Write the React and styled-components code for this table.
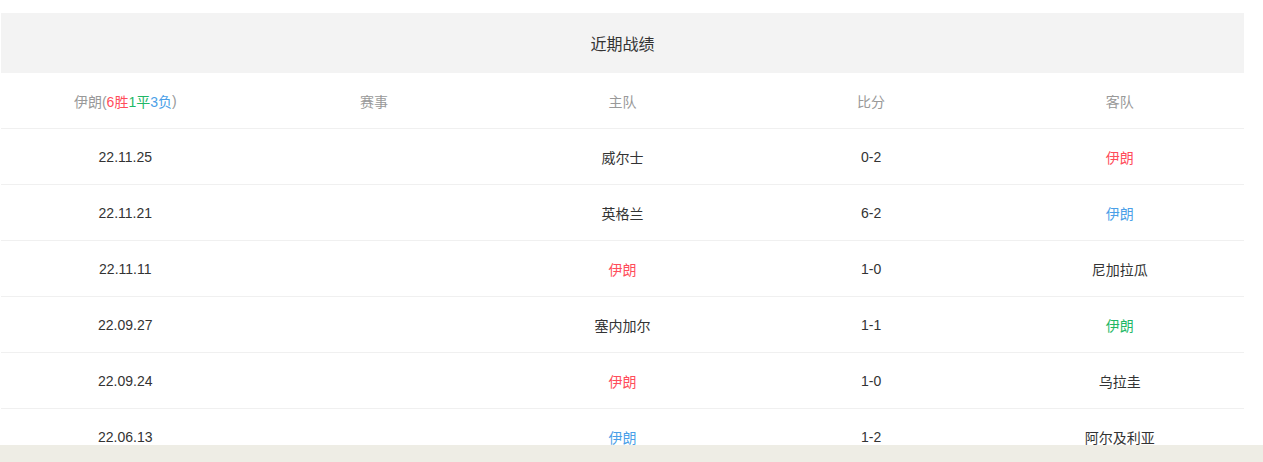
import React from 'react';
import styled, { createGlobalStyle } from 'styled-components';

const RESULT_COLORS = {
  win: '#ff4d5b',
  draw: '#1fb866',
  loss: '#4b9fe8',
};

const matches = [
  { date: '22.11.25', home: '威尔士', score: '0-2', away: '伊朗', mark: 'away', result: 'win' },
  { date: '22.11.21', home: '英格兰', score: '6-2', away: '伊朗', mark: 'away', result: 'loss' },
  { date: '22.11.11', home: '伊朗', score: '1-0', away: '尼加拉瓜', mark: 'home', result: 'win' },
  { date: '22.09.27', home: '塞内加尔', score: '1-1', away: '伊朗', mark: 'away', result: 'draw' },
  { date: '22.09.24', home: '伊朗', score: '1-0', away: '乌拉圭', mark: 'home', result: 'win' },
  { date: '22.06.13', home: '伊朗', score: '1-2', away: '阿尔及利亚', mark: 'home', result: 'loss' },
];

const App = () => (
  <>
    <GlobalStyle />
    <Page>
      <Panel>
        <Caption>近期战绩</Caption>
        <HeadRow>
          <HeadCell>
            伊朗(<Tint result="win">6胜</Tint>
            <Tint result="draw">1平</Tint>
            <Tint result="loss">3负</Tint>)
          </HeadCell>
          <HeadCell>赛事</HeadCell>
          <HeadCell>主队</HeadCell>
          <HeadCell>比分</HeadCell>
          <HeadCell>客队</HeadCell>
        </HeadRow>
        {matches.map((m) => (
          <Row key={m.date}>
            <Cell>{m.date}</Cell>
            <Cell />
            <Cell>{m.mark === 'home' ? <Tint result={m.result}>{m.home}</Tint> : m.home}</Cell>
            <Cell>{m.score}</Cell>
            <Cell>{m.mark === 'away' ? <Tint result={m.result}>{m.away}</Tint> : m.away}</Cell>
          </Row>
        ))}
      </Panel>
    </Page>
    <Footer />
  </>
);

const GlobalStyle = createGlobalStyle`
  html, body {
    margin: 0;
    padding: 0;
    background: #fff;
    overflow: hidden;
  }
  body {
    font-family: 'Liberation Sans', 'Noto Sans CJK SC', sans-serif;
    font-size: 14px;
    color: #333;
  }
`;

const Page = styled.div`
  height: 445px;
  box-sizing: border-box;
  padding: 13px 19px 0 1px;
  overflow: hidden;
`;

const Panel = styled.div`
  display: flex;
  flex-direction: column;
`;

const Caption = styled.div`
  height: 60px;
  display: flex;
  align-items: center;
  justify-content: center;
  background: #f3f3f3;
  font-size: 16px;
  color: #333;
`;

const HeadRow = styled.div`
  display: grid;
  grid-template-columns: repeat(5, 1fr);
  flex: none;
  height: 56px;
  box-sizing: border-box;
  border-bottom: 1px solid #f0f0f0;
`;

const Row = styled(HeadRow)``;

const Cell = styled.div`
  display: flex;
  align-items: center;
  justify-content: center;
  color: #333;
`;

const HeadCell = styled(Cell)`
  color: #999;
`;

const Tint = styled.span`
  color: ${(p) => RESULT_COLORS[p.result]};
`;

const Footer = styled.div`
  height: 17px;
  background: #eeede5;
`;

export default App;
